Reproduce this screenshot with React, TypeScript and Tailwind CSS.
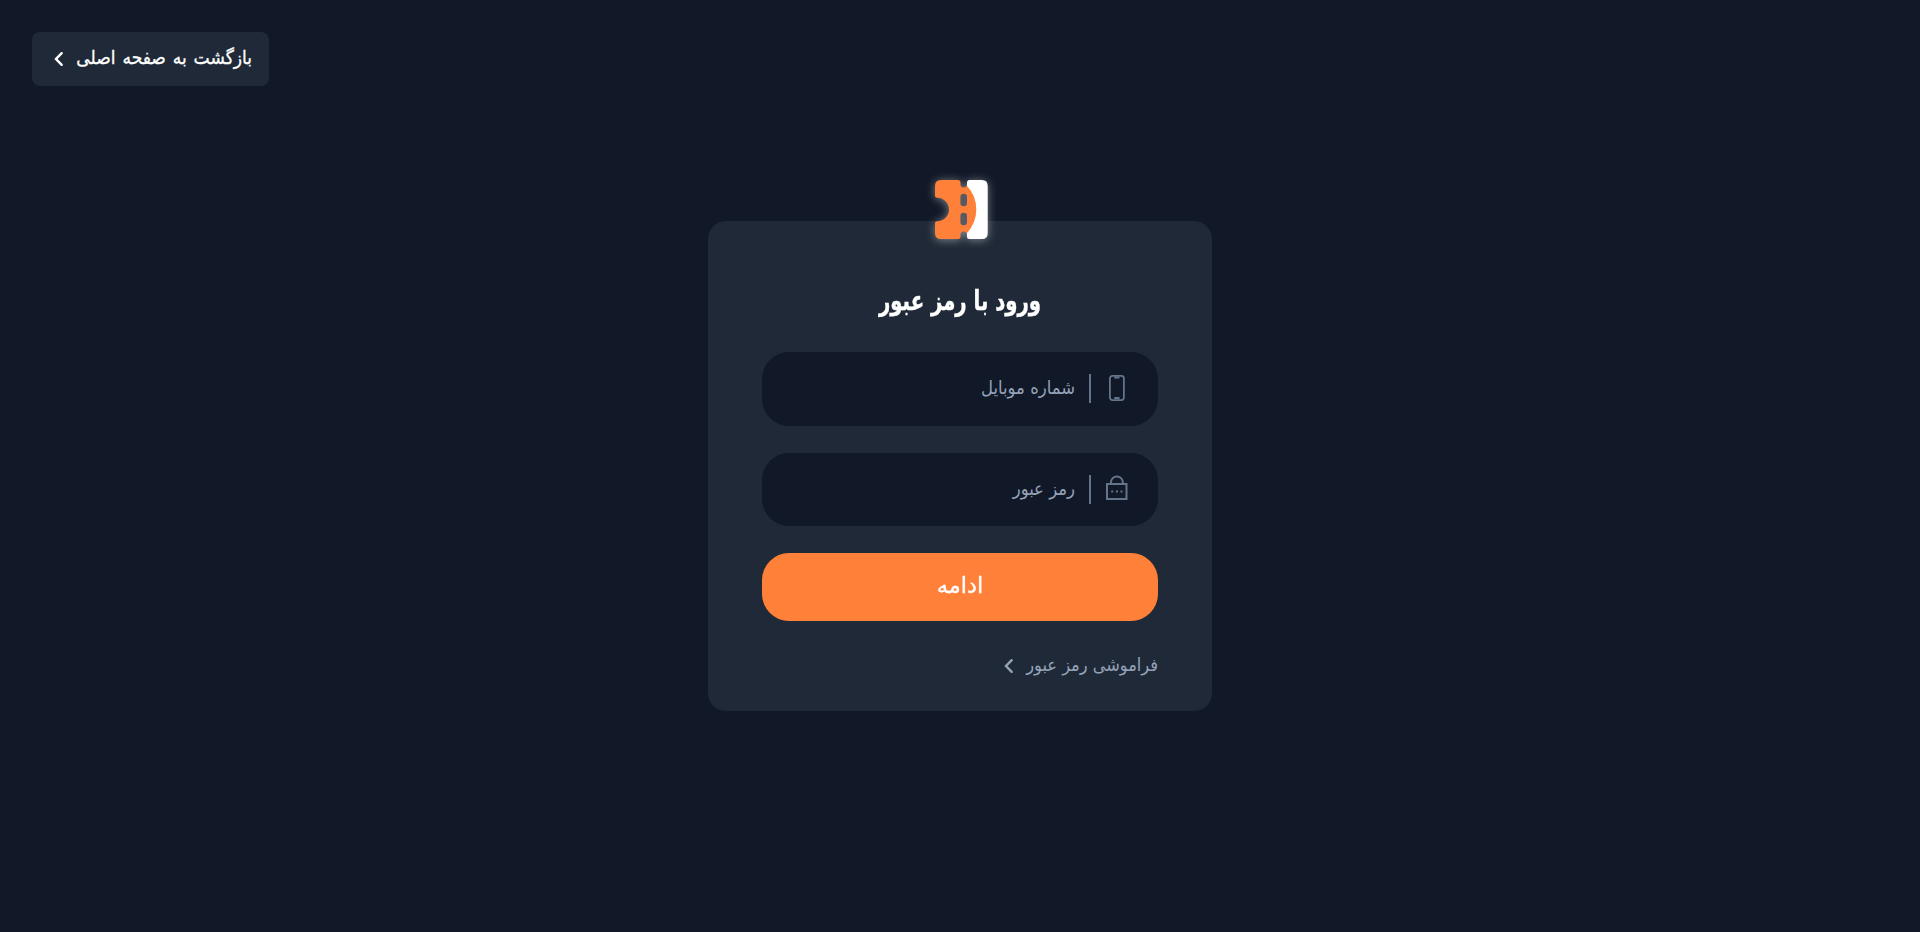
import React from "react";

function Chevron({ className }: { className: string }) {
  return (
    <svg viewBox="0 0 10 16" fill="none" stroke="currentColor" strokeWidth="2.4" className={className}>
      <path d="M7.700 2.200 2 8l5.700 5.800" strokeLinecap="round" strokeLinejoin="miter" />
    </svg>
  );
}

function Logo() {
  return (
    <svg
      viewBox="0 0 53 59"
      className="h-[59px] w-[53px] overflow-visible drop-shadow-[0_1px_5px_rgba(255,255,255,0.45)]"
    >
      <path
        fill="#fff"
        d="M32 2.500Q32 0 34.500 0H47q5.700 0 5.700 6v47q0 6-5.700 6H34.500Q32 59 32 56.500V52q8-9 8-22.500T32 7Z"
      />
      <path
        fill="#ff8139"
        d="M6 0h17q2.500 0 2.500 2.500V4a3.250 3.250 0 0 0 6.200 1.600Q41.300 16 41.300 29.500T31.700 53.400a3.250 3.250 0 0 0-6.200 1.600v1.500Q25.500 59 23 59H6q-6 0-6-6V43q0-1.700 2.200-1.700a11.700 11.700 0 0 0 0-23.600Q0 17.700 0 16V6q0-6 6-6Z"
      />
      <rect x="25.400" y="13.700" width="6.600" height="12.600" rx="3.300" fill="#575a62" />
      <rect x="25.400" y="32.700" width="6.600" height="12.600" rx="3.300" fill="#575a62" />
    </svg>
  );
}

function PhoneIcon() {
  return (
    <svg viewBox="0 0 16 26" fill="none" stroke="currentColor" className="mb-0.5 me-[-1px] h-[26px] w-4">
      <rect x=".9" y=".9" width="14" height="24.200" rx="2.500" strokeWidth="1.800" />
      <path d="M5.300 2.500h5.200M5.300 23h5.200" strokeWidth="2" />
    </svg>
  );
}

function LockIcon() {
  return (
    <svg viewBox="0 0 22 25" fill="none" stroke="currentColor" className="mb-[3px] me-[-1px] h-[25px] w-[22px]">
      <path d="M1 9h19.500v15H1ZM5 9V7.300a5.900 5.900 0 0 1 11.800 0V9" strokeWidth="2" />
      <path d="M5.200 16.500h2M9.900 16.500h2M14.500 16.500h2" strokeWidth="2" />
    </svg>
  );
}

function Field({ icon, label }: { icon: React.ReactNode; label: string }) {
  return (
    <label className="flex h-[73.500px] items-center rounded-[27px] bg-[#111827] px-[27px] text-[#64748b]">
      <span className="flex w-[27px] shrink-0 justify-center">{icon}</span>
      <span className="ms-[13px] h-[29px] w-0.5 bg-[#64748b]" />
      <span className="ms-[14px] pb-0.5 text-[18.300px] text-[#94a3b8]">{label}</span>
    </label>
  );
}

export default function App() {
  return (
    <main
      dir="rtl"
      className="flex h-[932px] flex-col bg-[#111827] px-8 font-['DejaVu_Sans_Condensed','DejaVu_Sans',sans-serif]"
    >
      <header className="flex justify-end pt-8">
        <a className="flex h-[54px] w-[237px] items-center rounded-lg bg-[#1f2937] ps-[17px] text-[19px] font-medium text-white">
          <span className="whitespace-nowrap pb-[3px] [-webkit-text-stroke:0.3px_white] [word-spacing:1.500px]">بازگشت به صفحه اصلی</span>
          <Chevron className="ms-[12px] h-4 w-[10px] shrink-0" />
        </a>
      </header>
      <section className="mx-auto mt-[94px] flex w-[504px] flex-col items-center">
        <div className="z-10 -mb-[18px] ms-[-2px]">
          <Logo />
        </div>
        <div className="flex h-[490px] w-full flex-col rounded-[18px] bg-[#1f2937] px-[54px]">
          <h1 className="mt-[60px] h-[44px] scale-x-[0.810] whitespace-nowrap text-center text-[27px] font-bold text-white [-webkit-text-stroke:0.4px_white]">
            ورود با رمز عبور
          </h1>
          <div className="mt-[27px] flex flex-col gap-[27px]">
            <Field icon={<PhoneIcon />} label="شماره موبایل" />
            <Field icon={<LockIcon />} label="رمز عبور" />
            <button className="h-[68px] rounded-[27px] bg-[#ff8139] pb-[3px] text-[25px] text-white">
              <span className="inline-block scale-y-[0.900] [-webkit-text-stroke:0.3px_white]">ادامه</span>
            </button>
          </div>
          <a className="mt-[30px] flex items-center text-[18px] text-[#94a3b8]">
            <span className="pb-px">فراموشی رمز عبور</span>
            <Chevron className="ms-[12px] mt-0.5 h-4 w-[10px]" />
          </a>
        </div>
      </section>
    </main>
  );
}
